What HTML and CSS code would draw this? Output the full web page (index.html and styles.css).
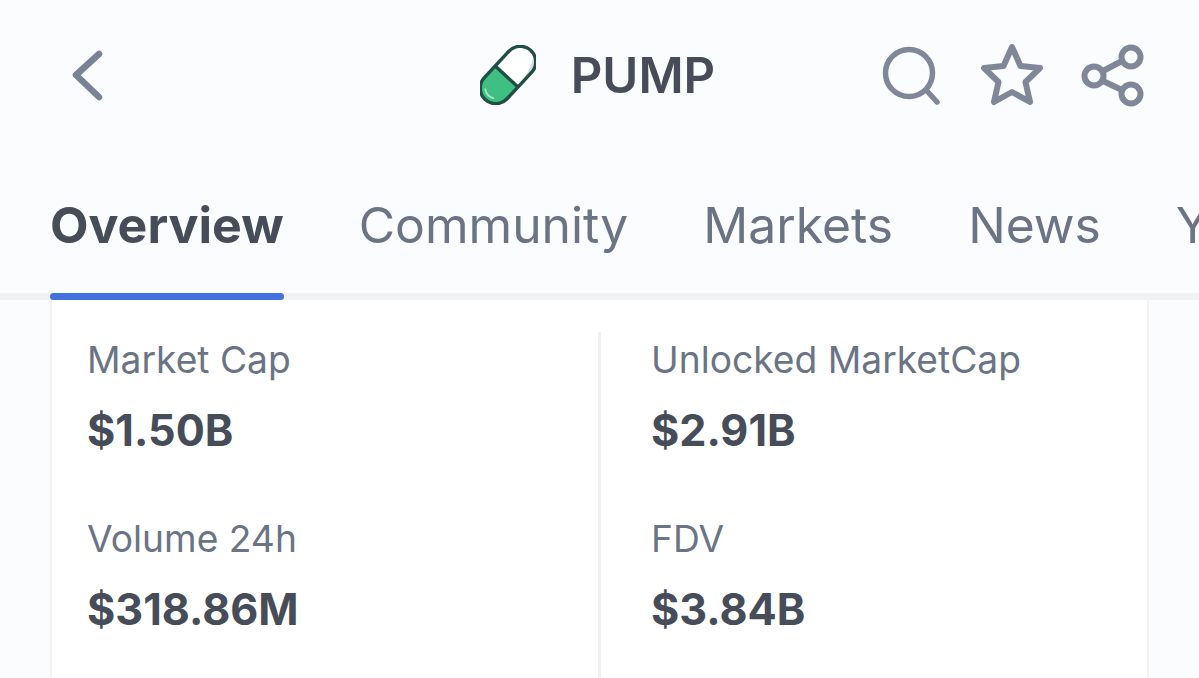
FILE: index.html
```html
<!DOCTYPE html>
<html>
<head>
    <meta charset="UTF-8">
    <meta name="viewport" content="width=device-width, initial-scale=1.0">
    <link rel="stylesheet" href="styles.css">
</head>
<body>
    <div class="header">
        <div class="header-left">
            <svg class="back-icon" viewBox="0 0 40 60" width="40" height="60" fill="none" stroke="#7a8296" stroke-width="6.5" stroke-linecap="round" stroke-linejoin="round">
                <path d="M31 9 L8 30 L31 52"/>
            </svg>
        </div>
        <div class="header-title">
            <svg class="pill-icon" viewBox="0 0 56 60" width="56" height="60">
                <g transform="translate(28 30) rotate(-47)">
                    <path d="M-2 -15.500 H-18 A15.500 15.500 0 0 0 -18 15.500 H-2 Z" fill="#3fc082"/>
                    <path d="M-2 -15.500 H18 A15.500 15.500 0 0 1 18 15.500 H-2 Z" fill="#ffffff"/>
                    <path d="M4 15.500 H18 A15.500 15.500 0 0 0 33 3 C28 10 18 12 4 15.500 Z" fill="#d3d9de"/>
                    <path d="M-26 -7 A12 12 0 0 0 -27 5" fill="none" stroke="#a2e6c3" stroke-width="1.800" stroke-linecap="round"/>
                    <rect x="-33.500" y="-15.500" width="67" height="31" rx="15.500" fill="none" stroke="#1f4f47" stroke-width="3.400"/>
                    <path d="M-2 -15.500 V15.500" stroke="#1f4f47" stroke-width="3.400"/>
                </g>
            </svg>
            <h1>PUMP</h1>
        </div>
        <div class="header-actions">
            <svg class="search-icon" viewBox="0 0 60 62" width="60" height="62" fill="none" stroke="#7f8798" stroke-width="5.500" stroke-linecap="round">
                <circle cx="28" cy="29" r="23.500"/>
                <path d="M46 47 L56 58"/>
            </svg>
            <svg viewBox="0 0 66 64" width="66" height="64" fill="none" stroke="#7f8798" stroke-width="6" stroke-linejoin="round">
                <path d="M33 4 L41.500 23 L61 25 L46.500 39 L51 59 L33 49 L15 59 L19.500 39 L5 25 L24.500 23 Z"/>
            </svg>
            <svg viewBox="0 0 64 64" width="64" height="64" fill="none" stroke="#7f8798" stroke-width="6">
                <circle cx="13" cy="33" r="9.500"/>
                <circle cx="50" cy="14" r="9.500"/>
                <circle cx="50" cy="51" r="9.500"/>
                <path d="M22 28 L41 18 M22 38 L41 47"/>
            </svg>
        </div>
    </div>

    <div class="tabs">
        <div class="tab active">Overview</div>
        <div class="tab">Community</div>
        <div class="tab">Markets</div>
        <div class="tab">News</div>
        <div class="tab">Yields</div>
    </div>

    <div class="card">
        <div class="stats">
            <div class="stat-col">
                <div class="stat">
                    <div class="stat-label">Market Cap</div>
                    <div class="stat-value">$1.50B</div>
                </div>
                <div class="stat">
                    <div class="stat-label">Volume 24h</div>
                    <div class="stat-value">$318.86M</div>
                </div>
            </div>
            <div class="stat-col">
                <div class="stat">
                    <div class="stat-label">Unlocked MarketCap</div>
                    <div class="stat-value">$2.91B</div>
                </div>
                <div class="stat">
                    <div class="stat-label">FDV</div>
                    <div class="stat-value">$3.84B</div>
                </div>
            </div>
        </div>
    </div>
</body>
</html>
```

FILE: styles.css
```css
body {
    margin: 0;
    height: 678px;
    overflow: hidden;
    background-color: #fafcfe;
    font-family: Inter, "Liberation Sans", sans-serif;
    color: #464c58;
}

.header {
    display: grid;
    grid-template-columns: 1fr auto 1fr;
    align-items: center;
    height: 150px;
    padding: 0 54px 0 50px;
}

.header-left {
    display: flex;
    align-items: center;
}

.back-icon {
    margin-left: 18px;
}

.header-title {
    display: flex;
    align-items: center;
    gap: 35px;
}

.header-title h1 {
    margin: 0;
    font-size: 49px;
    font-weight: 600;
}

.header-actions {
    display: flex;
    align-items: center;
    justify-content: flex-end;
    gap: 36px;
}

.search-icon {
    margin-right: 2px;
}

.tabs {
    display: flex;
    gap: 75px;
    height: 150px;
    padding-left: 50px;
    overflow: hidden;
    box-shadow: inset 0 -7px 0 #f1f2f4;
    white-space: nowrap;
}

.tab {
    height: 150px;
    box-sizing: border-box;
    padding-top: 47px;
    font-size: 49.800px;
    line-height: 57px;
    color: #6b7485;
}

.tab.active {
    font-size: 50px;
    font-weight: 700;
    color: #464c58;
    position: relative;
}

.tab.active:after {
    content: "";
    position: absolute;
    left: 0;
    right: 0;
    bottom: 0;
    height: 7px;
    border-radius: 4px;
    background-color: #4272e0;
}

.card {
    width: 1099px;
    height: 378px;
    margin-left: 50px;
    box-sizing: border-box;
    background-color: #fff;
    border-left: 2px solid #f2f3f5;
    border-right: 2px solid #f2f3f5;
    padding-top: 32px;
}

.stats {
    display: grid;
    grid-template-columns: 546px 1fr;
    height: 346px;
}

.stat-col {
    display: flex;
    flex-direction: column;
    gap: 58px;
    padding: 2px 0 0 35px;
    overflow: hidden;
}

.stat-col + .stat-col {
    border-left: 3px solid #f0f1f3;
    padding-left: 50px;
}

.stat-label {
    font-size: 37.200px;
    line-height: 52px;
    color: #6b7485;
    white-space: nowrap;
}

.stat-value {
    margin-top: 19px;
    font-size: 43.200px;
    line-height: 50px;
    font-weight: 700;
    color: #464c58;
}
```
